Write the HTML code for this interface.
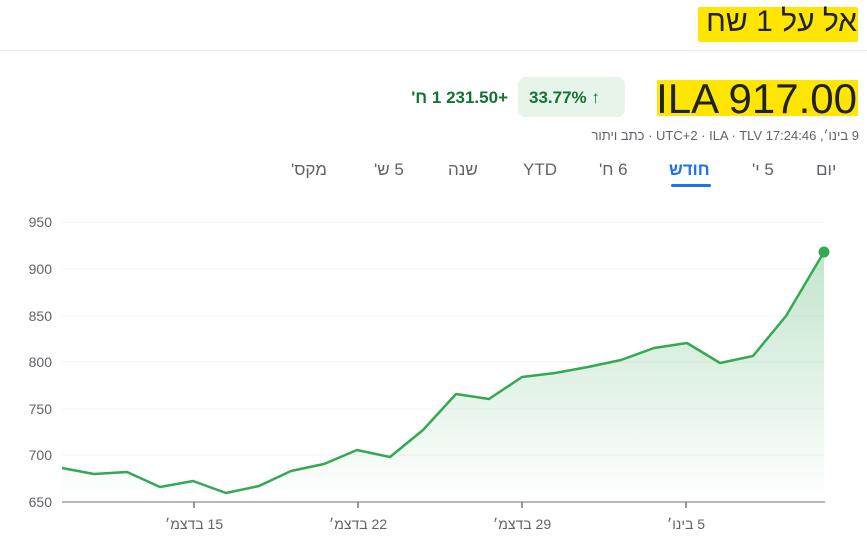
<!DOCTYPE html>
<html><head><meta charset="utf-8"><style>
html,body{margin:0;padding:0;background:#fff;width:867px;height:556px;overflow:hidden;position:relative;font-family:"Liberation Sans","Noto Sans CJK JP",sans-serif;}
.a{position:absolute;white-space:nowrap}
.r{unicode-bidi:isolate;direction:rtl;display:inline-block}
.l{unicode-bidi:isolate;direction:ltr;display:inline-block}
.t{direction:rtl;unicode-bidi:isolate}
</style></head><body>
<div class="a" style="left:698px;top:7px;width:160px;height:35px;background:#ffe600;border-radius:2px"></div>
<div class="a" style="right:10px;top:5px;font-size:30px;color:#202124;direction:rtl">אל על 1 שח</div>
<div class="a" style="left:0;top:50px;width:867px;height:1px;background:#e8eaed"></div>
<div class="a" style="left:657px;top:80px;width:201px;height:36px;background:#ffe600"></div>
<div class="a" style="right:10px;top:75px;font-size:42px;color:#202124">ILA 917.00</div>
<div class="a" style="left:518px;top:77px;width:107px;height:40px;background:#e6f4ea;border-radius:8px"></div>
<div class="a" style="left:529px;top:88px;font-size:17px;color:#137333;font-weight:bold">33.77% <span style="font-weight:normal">↑</span></div>
<div class="a" style="right:359px;top:88px;font-size:17px;color:#137333;font-weight:bold;direction:ltr"><span class="r">ח'</span> <span class="l">1 231.50+</span></div>
<div class="a" style="right:8px;top:128px;font-size:13px;color:#5f6368;direction:ltr"><span class="r">כתב ויתור</span> <span class="l">· UTC+2 · ILA · TLV 17:24:46</span> <span class="r">בינו׳,</span> <span class="l">9</span></div>
<div class="a" style="left:0;top:160px;width:867px;font-size:17px;color:#5f6368">
<span class="a t" style="left:816px">יום</span>
<span class="a t" style="left:752px">5 י'</span>
<span class="a t" style="left:669px;color:#1a73e8;font-weight:bold">חודש</span>
<span class="a t" style="left:599px">6 ח'</span>
<span class="a" style="left:523px">YTD</span>
<span class="a t" style="left:448px">שנה</span>
<span class="a t" style="left:374px">5 ש'</span>
<span class="a t" style="left:291px">מקס'</span>
</div>
<div class="a" style="left:671px;top:184px;width:40px;height:3px;background:#1a73e8;border-radius:2px"></div>
<svg class="a" style="left:0;top:0" width="867" height="556">
<defs><linearGradient id="g" x1="0" y1="0" x2="0" y2="1"><stop offset="0" stop-color="#34a853" stop-opacity="0.3"/><stop offset="1" stop-color="#34a853" stop-opacity="0"/></linearGradient></defs>
<g stroke="#f1f3f4" stroke-width="1">
<line x1="62" y1="222" x2="825" y2="222"/><line x1="62" y1="269" x2="825" y2="269"/><line x1="62" y1="316" x2="825" y2="316"/><line x1="62" y1="362" x2="825" y2="362"/><line x1="62" y1="409" x2="825" y2="409"/><line x1="62" y1="455" x2="825" y2="455"/>
</g>
<line x1="62" y1="502" x2="825" y2="502" stroke="#9aa0a6" stroke-width="1.5"/>
<g stroke="#70757a" stroke-width="1.5"><line x1="194" y1="502" x2="194" y2="508"/><line x1="358" y1="502" x2="358" y2="508"/><line x1="522" y1="502" x2="522" y2="508"/><line x1="686" y1="502" x2="686" y2="508"/></g>
<path d="M62,468 L94,474 L127,472 L160,487 L193,481 L226,493 L259,486 L291,471 L324,464 L357,450 L390,457 L423,430 L456,394 L489,399 L522,377 L555,373 L588,367 L621,360 L654,348 L687,343 L720,363 L753,356 L786,316 L824,252 L824,502 L62,502 Z" fill="url(#g)"/>
<path d="M62,468 L94,474 L127,472 L160,487 L193,481 L226,493 L259,486 L291,471 L324,464 L357,450 L390,457 L423,430 L456,394 L489,399 L522,377 L555,373 L588,367 L621,360 L654,348 L687,343 L720,363 L753,356 L786,316 L824,252" fill="none" stroke="#34a853" stroke-width="2.5" stroke-linejoin="round"/>
<circle cx="824" cy="252" r="5.5" fill="#34a853"/>
<g font-family="'Liberation Sans Narrow','Liberation Sans',sans-serif" font-size="14" fill="#5f6368">
<text x="52" y="227" text-anchor="end">950</text><text x="52" y="274" text-anchor="end">900</text><text x="52" y="321" text-anchor="end">850</text><text x="52" y="367" text-anchor="end">800</text><text x="52" y="414" text-anchor="end">750</text><text x="52" y="460" text-anchor="end">700</text><text x="52" y="507" text-anchor="end">650</text>
<text x="194" y="529" text-anchor="middle" direction="rtl">15 בדצמ׳</text>
<text x="358" y="529" text-anchor="middle" direction="rtl">22 בדצמ׳</text>
<text x="522" y="529" text-anchor="middle" direction="rtl">29 בדצמ׳</text>
<text x="686" y="529" text-anchor="middle" direction="rtl">5 בינו׳</text>
</g>
</svg>
</body></html>
